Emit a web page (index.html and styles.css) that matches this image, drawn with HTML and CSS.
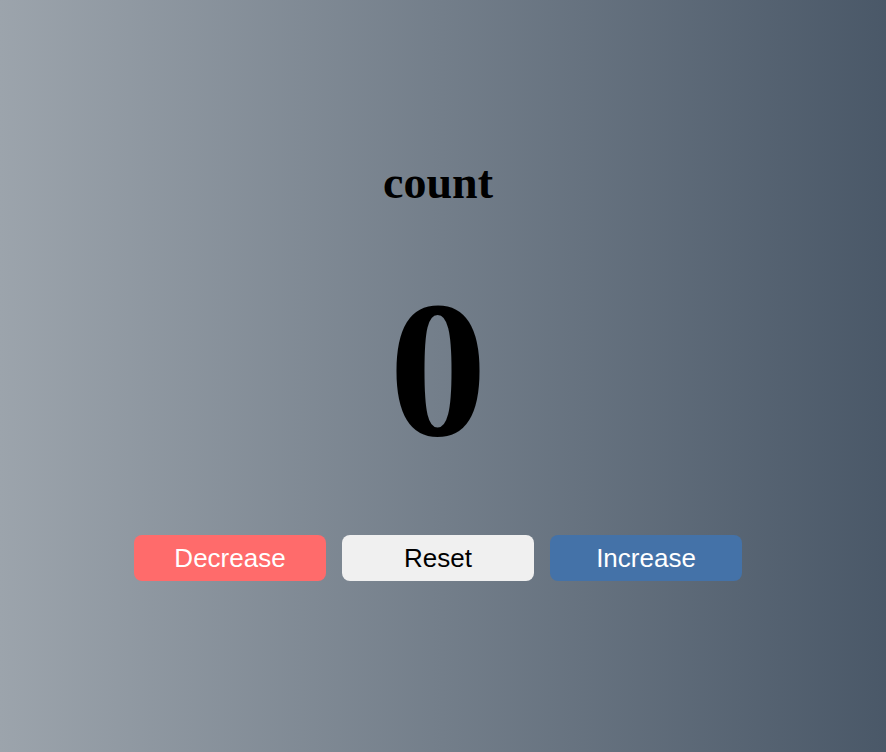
FILE: index.html
```html
<!DOCTYPE html>
<html>
<head>
<meta charset="utf-8">
<link rel="stylesheet" href="styles.css">
</head>
<body>
<main class="counter">
  <h1 class="title">count</h1>
  <div class="value">0</div>
  <div class="buttons">
    <button class="btn btn-dec">Decrease</button>
    <button class="btn btn-reset">Reset</button>
    <button class="btn btn-inc">Increase</button>
  </div>
</main>
</body>
</html>
```
FILE: styles.css
```css
html, body {
  margin: 0;
  height: 100%;
}
body {
  background: linear-gradient(to right, #9ca4ac, #4a5868);
  font-family: "Liberation Serif", serif;
}
.counter {
  display: flex;
  flex-direction: column;
  align-items: center;
  padding-top: 150px;
  padding-right: 10px;
}
.title {
  margin: 0;
  font-size: 46px;
  font-weight: bold;
  line-height: 66px;
  color: #000;
}
.value {
  margin-top: 38px;
  font-size: 196px;
  font-weight: bold;
  line-height: 230px;
  color: #000;
}
.buttons {
  display: flex;
  gap: 16px;
  margin-top: 51px;
}
.btn {
  width: 192px;
  height: 46px;
  border: none;
  border-radius: 8px;
  font-family: "Liberation Sans", Arial, sans-serif;
  font-size: 26px;
  cursor: pointer;
}
.btn-dec { background: #ff6b6b; color: #fff; }
.btn-reset { background: #f0f0f0; color: #000; }
.btn-inc { background: #4472a8; color: #fff; }
```
